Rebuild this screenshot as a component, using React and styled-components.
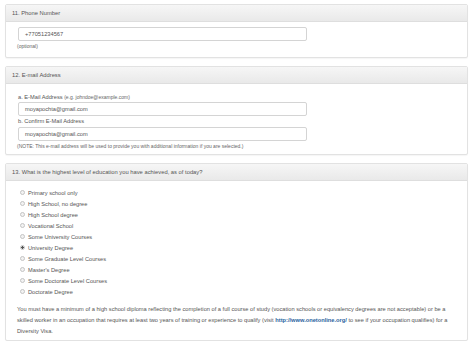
import React from 'react'
import styled, { createGlobalStyle } from 'styled-components'

const GlobalStyle = createGlobalStyle`
  body {
    margin: 0;
    background: #fff;
    font-family: "Liberation Sans", Arial, sans-serif;
    color: #444;
  }
`

const Page = styled.div`
  padding: 4px 6px 0 5px;
  display: flex;
  flex-direction: column;
  gap: 8px;
  font-size: 5.7px;
`

const Panel = styled.section`
  border: 1px solid #e2e2e2;
  border-radius: 2px;
  background: #fff;
  box-shadow: 0 1px 1px rgba(0, 0, 0, 0.04);
`

const PanelHeader = styled.div`
  height: 16px;
  line-height: 16px;
  padding: 0 6px;
  background: linear-gradient(to bottom, #f6f6f6 0%, #e9e9e9 100%);
  border-bottom: 1px solid #dedede;
  color: #555;
  font-size: 5.8px;
`

const PanelBody = styled.div`
  padding: ${p => p.$pad || '5px 11px 6px'};
`

const TextInput = styled.div`
  box-sizing: border-box;
  width: 289px;
  height: 14px;
  line-height: 12px;
  border: 1px solid #d4d4d4;
  border-radius: 2px;
  padding: 0 6px;
  color: #555;
  margin-left: 1px;
`

const Label = styled.div`
  height: ${p => p.$h || 10}px;
  line-height: ${p => p.$h || 10}px;
  padding-left: 1px;
  color: #555;
`

const Hint = styled.div`
  line-height: 10px;
  font-size: 5px;
  color: #666;
`

const RadioList = styled.div`
  display: flex;
  flex-direction: column;
  padding-left: 3px;
`

const RadioRow = styled.label`
  display: flex;
  align-items: center;
  gap: 3px;
  height: 11px;
  color: #555;
`

const Dot = styled.span`
  box-sizing: border-box;
  width: 5px;
  height: 5px;
  border-radius: 50%;
  border: 1px solid #c4c4c4;
  background: ${p => (p.$on ? 'radial-gradient(circle, #555 0 1.2px, #ddd 1.4px)' : '#f2f2f2')};
`

const Note = styled.p`
  margin: 7px 0 0;
  line-height: 11px;
  color: #555;
`

const Link = styled.a`
  color: #2a5f9e;
  font-weight: bold;
  text-decoration: none;
`

const levels = [
  'Primary school only',
  'High School, no degree',
  'High School degree',
  'Vocational School',
  'Some University Courses',
  'University Degree',
  'Some Graduate Level Courses',
  "Master's Degree",
  'Some Doctorate Level Courses',
  'Doctorate Degree',
]

export default function App() {
  return (
    <>
      <GlobalStyle />
      <Page>
        <Panel>
          <PanelHeader>11. Phone Number</PanelHeader>
          <PanelBody>
            <TextInput>+77051234567</TextInput>
            <Hint>(optional)</Hint>
          </PanelBody>
        </Panel>

        <Panel>
          <PanelHeader>12. E-mail Address</PanelHeader>
          <PanelBody $pad="8px 11px 3px">
            <Label $h={10}>a. E-Mail Address <Hint as="span">(e.g. johndoe@example.com)</Hint></Label>
            <TextInput>moyapochta@gmail.com</TextInput>
            <Label $h={11}>b. Confirm E-Mail Address</Label>
            <TextInput>moyapochta@gmail.com</TextInput>
            <Hint>(NOTE: This e-mail address will be used to provide you with additional information if you are selected.)</Hint>
          </PanelBody>
        </Panel>

        <Panel>
          <PanelHeader>13. What is the highest level of education you have achieved, as of today?</PanelHeader>
          <PanelBody $pad="6px 11px 3px">
            <RadioList>
              {levels.map(l => (
                <RadioRow key={l}>
                  <Dot $on={l === 'University Degree'} />
                  {l}
                </RadioRow>
              ))}
            </RadioList>
            <Note>
              You must have a minimum of a high school diploma reflecting the completion of a full course of study
              (vocation schools or equivalency degrees are not acceptable) or be a skilled worker in an occupation that
              requires at least two years of training or experience to qualify (visit{' '}
              <Link href="#">http://www.onetonline.org/</Link> to see if your occupation qualifies) for a Diversity Visa.
            </Note>
          </PanelBody>
        </Panel>
      </Page>
    </>
  )
}
